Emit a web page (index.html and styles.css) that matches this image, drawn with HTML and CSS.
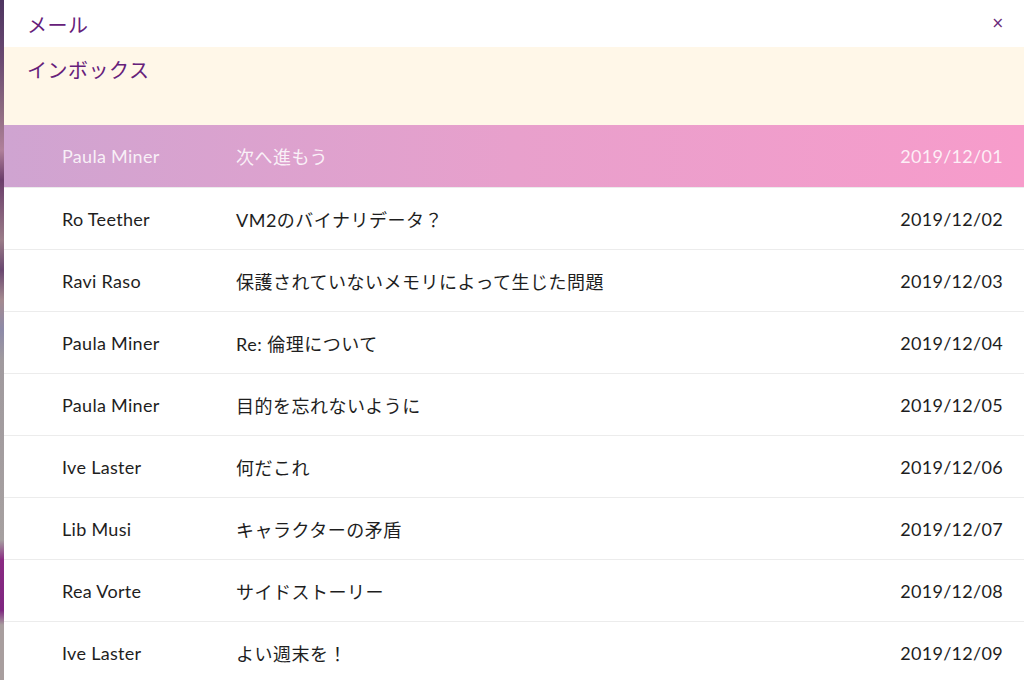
FILE: index.html
```html
<!DOCTYPE html>
<html lang="ja">
<head>
<meta charset="utf-8">
<title>メール</title>
<link rel="stylesheet" href="styles.css">
</head>
<body>
<div class="panel">
  <header class="head">
    <h1 class="title">メール</h1>
    <button class="close" aria-label="閉じる">×</button>
  </header>
  <div class="folder">インボックス</div>
  <ul class="list">
    <li class="row active"><span class="from">Paula Miner</span><span class="subj">次へ進もう</span><span class="date">2019/12/01</span></li>
    <li class="row"><span class="from">Ro Teether</span><span class="subj">VM2のバイナリデータ？</span><span class="date">2019/12/02</span></li>
    <li class="row"><span class="from">Ravi Raso</span><span class="subj">保護されていないメモリによって生じた問題</span><span class="date">2019/12/03</span></li>
    <li class="row"><span class="from">Paula Miner</span><span class="subj">Re: 倫理について</span><span class="date">2019/12/04</span></li>
    <li class="row"><span class="from">Paula Miner</span><span class="subj">目的を忘れないように</span><span class="date">2019/12/05</span></li>
    <li class="row"><span class="from">Ive Laster</span><span class="subj">何だこれ</span><span class="date">2019/12/06</span></li>
    <li class="row"><span class="from">Lib Musi</span><span class="subj">キャラクターの矛盾</span><span class="date">2019/12/07</span></li>
    <li class="row"><span class="from">Rea Vorte</span><span class="subj">サイドストーリー</span><span class="date">2019/12/08</span></li>
    <li class="row"><span class="from">Ive Laster</span><span class="subj">よい週末を！</span><span class="date">2019/12/09</span></li>
  </ul>
</div>
</body>
</html>
```
FILE: styles.css
```css
html, body {
  margin: 0;
  height: 100%;
  overflow: hidden;
}
body {
  background: linear-gradient(to bottom,
    #4e3560 0px, #6a4a72 60px, #8c6a80 110px, #b0809a 150px, #6a3d6a 180px,
    #9a7c88 240px, #6a4870 270px, #a48a90 300px, #8d8aa8 330px, #a09a9e 360px,
    #a6a0a0 540px, #8a2a82 560px, #7e2680 610px, #a89e9e 625px, #a89e9e 680px);
  font-family: "Lato", "Noto Sans CJK JP", sans-serif;
}
.panel {
  margin-left: 4px;
  height: 100%;
  background: #fff;
}
.head {
  height: 47px;
  display: flex;
  align-items: center;
  justify-content: space-between;
  padding: 0 20px 0 23px;
}
.title {
  margin: 0;
  padding-top: 2px;
  font-family: "Noto Sans CJK JP", sans-serif;
  font-weight: 400;
  font-size: 20px;
  color: #66207a;
  letter-spacing: 0.5px;
}
.close {
  border: 0;
  background: none;
  padding: 0;
  font-family: "DejaVu Sans", sans-serif;
  font-size: 15px;
  color: #6a2a7a;
  line-height: 1;
}
.folder {
  height: 78px;
  box-sizing: border-box;
  background: #fff7e8;
  padding: 8px 0 0 23px;
  font-family: "Noto Sans CJK JP", sans-serif;
  font-size: 20px;
  color: #66207a;
  letter-spacing: 0.5px;
}
.list {
  list-style: none;
  margin: 0;
  padding: 0;
}
.row {
  height: 62px;
  box-sizing: border-box;
  display: grid;
  grid-template-columns: 174px 1fr auto;
  align-items: center;
  padding: 0 21px 0 58px;
  border-top: 1px solid #ececec;
  font-size: 18px;
  letter-spacing: 0.3px;
  color: #1e1e1e;
}
.row.active {
  border-top: 0;
  background: linear-gradient(to right, #cfa4d1, #e8a0cc 50%, #f79ccb);
  color: rgba(255, 255, 255, 0.85);
}
.subj {
  letter-spacing: 0.5px;
}
```
